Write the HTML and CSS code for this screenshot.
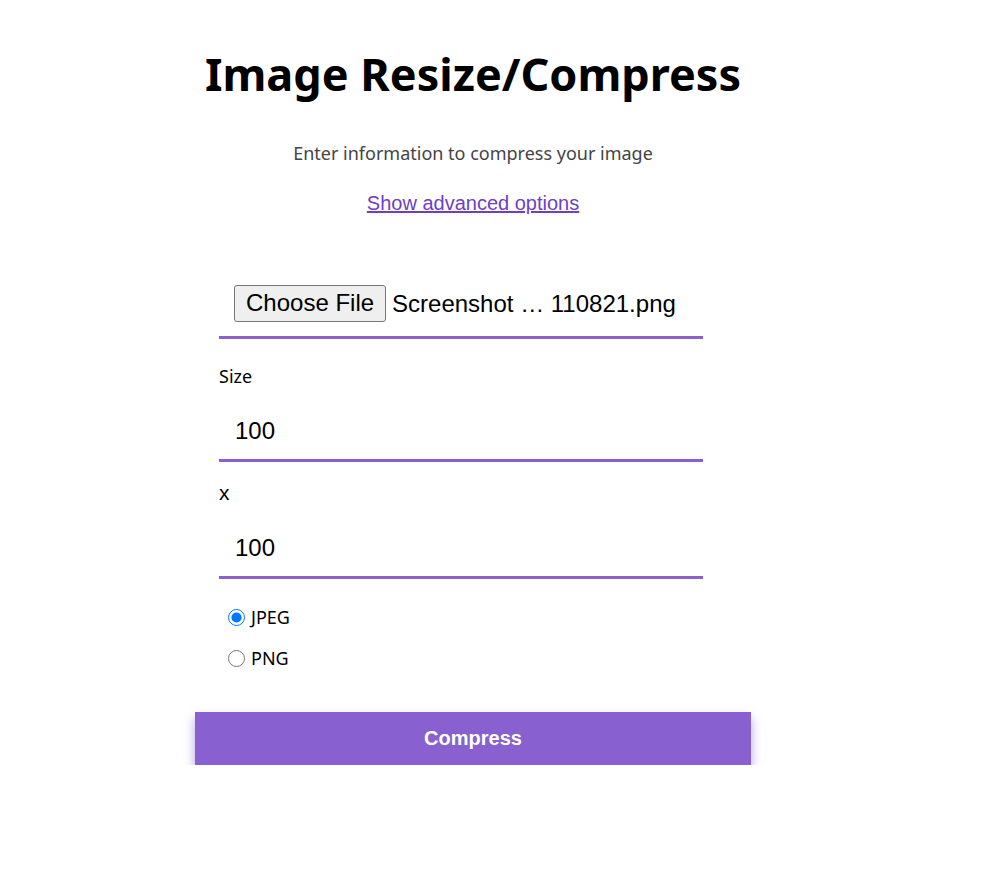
FILE: index.html
```html
<!DOCTYPE html>
<html lang="en">
<head>
<meta charset="utf-8">
<title>Image Resize/Compress</title>
<link rel="stylesheet" href="styles.css">
</head>
<body>
<main class="page">
  <h1 class="title">Image Resize/Compress</h1>
  <p class="subtitle">Enter information to compress your image</p>
  <p class="advanced"><a href="#" class="advanced-link">Show advanced options</a></p>
  <form class="form">
    <div class="field field-file">
      <span class="file-btn">Choose File</span>
      <span class="file-name">Screenshot … 110821.png</span>
    </div>
    <label class="label label-first">Size</label>
    <div class="field field-text"><input class="text-input" type="text" value="100"></div>
    <label class="label label-x">x</label>
    <div class="field field-text"><input class="text-input" type="text" value="100"></div>
    <div class="radios">
      <label class="radio-row"><input class="radio" type="radio" name="fmt" checked> <span>JPEG</span></label>
      <label class="radio-row"><input class="radio" type="radio" name="fmt"> <span>PNG</span></label>
    </div>
    <button type="button" class="submit">Compress</button>
  </form>
</main>
</body>
</html>
```
FILE: styles.css
```css
* { box-sizing: border-box; }
html, body { margin: 0; padding: 0; background: #fff; }
body { font-family: "Noto Sans", "Open Sans", sans-serif; color: #000; }

.page {
  width: 556px;
  margin-left: 195px;
  padding-top: 44px;
}

.title {
  margin: 0;
  text-align: center;
  font-size: 45px;
  line-height: 60px;
  font-weight: 700;
}

.subtitle {
  margin: 37px 0 0;
  text-align: center;
  font-size: 18px;
  line-height: 24px;
  color: #444;
}

.advanced {
  margin: 26px 0 0;
  text-align: center;
  font-family: "Liberation Sans", Arial, sans-serif;
  font-size: 20px;
  line-height: 24px;
}
.advanced-link { color: #6c3fc6; }

.form {
  margin: 57px 24px 0;
  width: 484px;
}

.field {
  border-bottom: 3px solid #8860d0;
}
.field-file {
  display: flex;
  align-items: center;
  gap: 6px;
  padding: 13px 15px 14px;
  font-family: "Liberation Sans", Arial, sans-serif;
  font-size: 24px;
}
.file-btn {
  background: #efefef;
  border: 1px solid #767676;
  border-radius: 3px;
  padding: 3px 11px 4px;
  line-height: 28px;
}
.file-name { line-height: 28px; }

.label {
  display: block;
  font-size: 18px;
  line-height: 22px;
  margin-top: 21px;
}
.label-first { margin-top: 26px; }
.label-x {
  font-family: "Liberation Sans", Arial, sans-serif;
  font-size: 21px;
  margin-top: 20px;
}

.text-input {
  display: block;
  width: 100%;
  border: 0;
  outline: none;
  background: transparent;
  padding: 30px 16px 14px;
  font-family: "Liberation Sans", Arial, sans-serif;
  font-size: 24px;
  line-height: 28px;
  color: #000;
}

.radios {
  padding: 26px 0 0 9px;
  display: flex;
  flex-direction: column;
  gap: 17px;
}
.radio-row {
  display: flex;
  align-items: center;
  gap: 6px;
  font-size: 18px;
  line-height: 24px;
}
.radio {
  width: 17px;
  height: 17px;
  margin: 0;
}

.submit {
  display: block;
  width: 556px;
  height: 53px;
  margin: 42px 0 0 -24px;
  border: 0;
  background: #8860d0;
  color: #fff;
  font-family: "Liberation Sans", Arial, sans-serif;
  font-size: 20px;
  font-weight: 700;
  box-shadow: 0 6px 10px rgba(136, 96, 208, 0.6);
}
```
